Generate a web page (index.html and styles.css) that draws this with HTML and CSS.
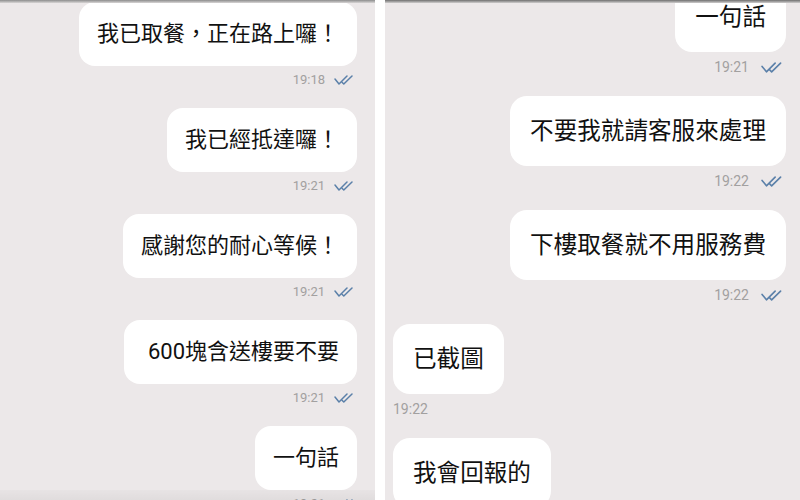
FILE: index.html
```html
<!DOCTYPE html>
<html lang="zh-TW">
<head>
<meta charset="utf-8">
<title>Chat</title>
<link rel="stylesheet" href="styles.css">
</head>
<body>
<div class="screen">
  <section class="chat chat--left">
    <div class="thread">
      <div class="msg msg--out">
        <div class="bubble">我已取餐，正在路上囉！</div>
        <div class="meta"><span class="time">19:18</span><svg class="ticks" viewBox="0 0 23 10"><polyline points="1,4 5,9 13,1"/><polyline points="8,7.2 9.8,9 18,1"/></svg></div>
      </div>
      <div class="msg msg--out">
        <div class="bubble">我已經抵達囉！</div>
        <div class="meta"><span class="time">19:21</span><svg class="ticks" viewBox="0 0 23 10"><polyline points="1,4 5,9 13,1"/><polyline points="8,7.2 9.8,9 18,1"/></svg></div>
      </div>
      <div class="msg msg--out">
        <div class="bubble">感謝您的耐心等候！</div>
        <div class="meta"><span class="time">19:21</span><svg class="ticks" viewBox="0 0 23 10"><polyline points="1,4 5,9 13,1"/><polyline points="8,7.2 9.8,9 18,1"/></svg></div>
      </div>
      <div class="msg msg--out">
        <div class="bubble bubble--wide">600塊含送樓要不要</div>
        <div class="meta"><span class="time">19:21</span><svg class="ticks" viewBox="0 0 23 10"><polyline points="1,4 5,9 13,1"/><polyline points="8,7.2 9.8,9 18,1"/></svg></div>
      </div>
      <div class="msg msg--out">
        <div class="bubble">一句話</div>
        <div class="meta"><span class="time">19:21</span><svg class="ticks" viewBox="0 0 23 10"><polyline points="1,4 5,9 13,1"/><polyline points="8,7.2 9.8,9 18,1"/></svg></div>
      </div>
    </div>
    <div class="bottom-shade"></div>
  </section>
  <section class="chat chat--right">
    <div class="thread">
      <div class="msg msg--out">
        <div class="bubble">一句話</div>
        <div class="meta"><span class="time">19:21</span><svg class="ticks" viewBox="0 0 23 10"><polyline points="1,4 5,9 13,1"/><polyline points="8,7.2 9.8,9 18,1"/></svg></div>
      </div>
      <div class="msg msg--out">
        <div class="bubble">不要我就請客服來處理</div>
        <div class="meta"><span class="time">19:22</span><svg class="ticks" viewBox="0 0 23 10"><polyline points="1,4 5,9 13,1"/><polyline points="8,7.2 9.8,9 18,1"/></svg></div>
      </div>
      <div class="msg msg--out">
        <div class="bubble">下樓取餐就不用服務費</div>
        <div class="meta"><span class="time">19:22</span><svg class="ticks" viewBox="0 0 23 10"><polyline points="1,4 5,9 13,1"/><polyline points="8,7.2 9.8,9 18,1"/></svg></div>
      </div>
      <div class="msg msg--in">
        <div class="bubble">已截圖</div>
        <div class="meta"><span class="time">19:22</span></div>
      </div>
      <div class="msg msg--in">
        <div class="bubble">我會回報的</div>
      </div>
    </div>
  </section>
</div>
</body>
</html>
```
FILE: styles.css
```css
* { box-sizing: border-box; }
html, body { margin: 0; padding: 0; background: #ffffff; }
body {
  width: 800px;
  height: 500px;
  overflow: hidden;
  font-family: "Roboto", "Noto Sans CJK TC", sans-serif;
  color: #111111;
}
.screen {
  display: flex;
  gap: 10px;
  height: 500px;
}
.chat {
  position: relative;
  overflow: hidden;
  background: #ece8e9;
  height: 500px;
}
.chat::before {
  content: "";
  position: absolute;
  left: 0; right: 0; top: 0;
  height: 3px;
  background: linear-gradient(#8c8c8c, #d8d6d6);
  z-index: 2;
}
.chat--left { width: 375px; padding: 2px 18px 0 8px; }
.chat--right { flex: 1; padding: 0 14px 0 8px; }
.chat--right::before { background: linear-gradient(#6f6f6f, #cfcdcd); }

.thread { display: flex; flex-direction: column; }
.chat--right .thread { margin-top: -18px; }

.msg { display: flex; flex-direction: column; margin-bottom: 20px; }
.msg--out { align-items: flex-end; }
.msg--in { align-items: flex-start; }

.bubble {
  background: #ffffff;
  border-radius: 16px;
  padding: 18px;
  font-size: 22px;
  line-height: 28px;
  font-weight: 400;
  white-space: nowrap;
}
.bubble--wide { padding-left: 24px; }

.meta {
  margin-top: 6px;
  height: 16px;
  display: flex;
  align-items: center;
  gap: 9px;
  font-size: 13px;
  line-height: 16px;
  color: #a2a0a0;
}
.ticks {
  width: 23px;
  height: 10px;
  fill: none;
  stroke: #5b80a9;
  stroke-width: 1.5;
  stroke-linecap: round;
  stroke-linejoin: round;
}

.chat--right .msg { margin-bottom: 21px; }
.chat--right .bubble {
  font-size: 23.6px;
  line-height: 30px;
  padding: 20px;
  border-radius: 17px;
}
.chat--right .meta {
  margin-top: 7px;
  font-size: 14px;
  gap: 12px;
}
.chat--right .ticks { width: 25px; height: 11px; }

.bottom-shade {
  position: absolute;
  left: 0; right: 0; bottom: 0;
  height: 10px;
  background: linear-gradient(rgba(0,0,0,0.02), rgba(0,0,0,0.05));
}
```
